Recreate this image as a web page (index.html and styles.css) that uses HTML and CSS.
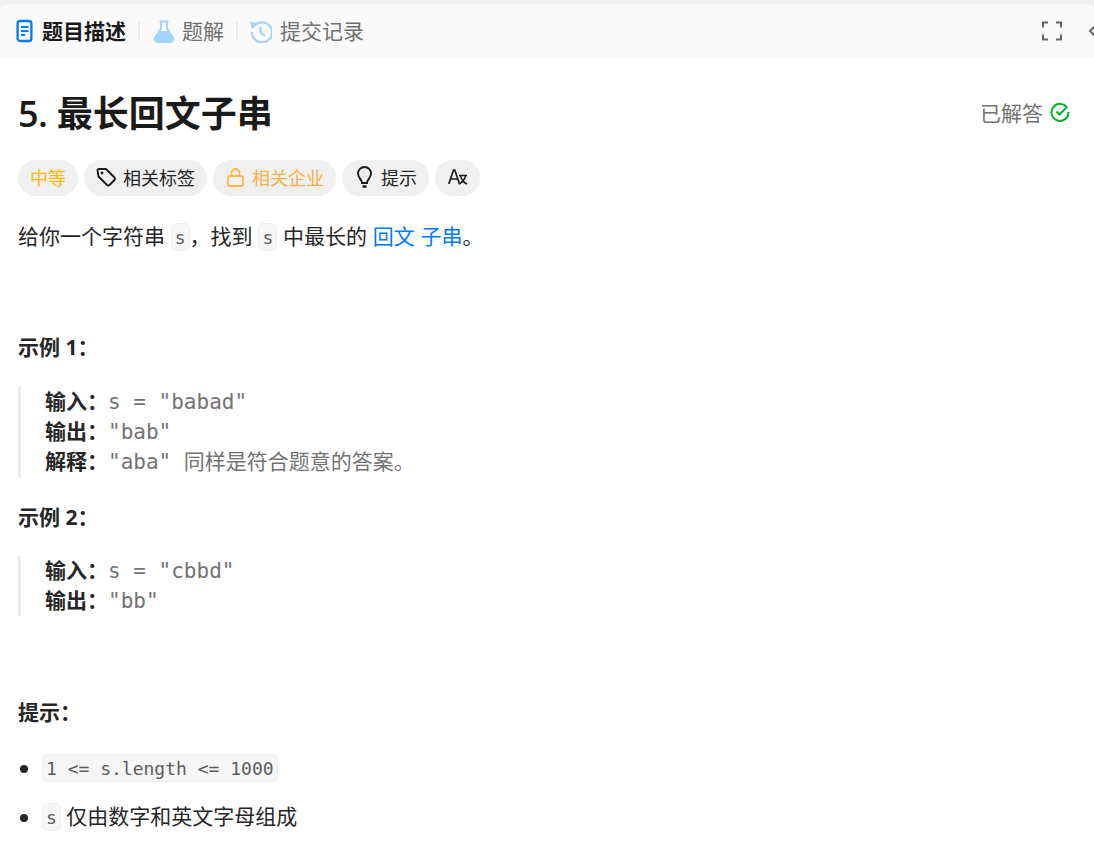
FILE: index.html
```html
<!DOCTYPE html>
<html lang="zh">
<head>
<meta charset="utf-8">
<title>5. 最长回文子串</title>
<link rel="stylesheet" href="styles.css">
</head>
<body>
<div class="panel">
  <nav class="tabbar">
    <div class="tabs">
      <div class="tab active">
        <svg viewBox="0 0 19 24" width="19" height="24"><rect x="2.600" y="2" width="13.800" height="20" rx="2.500" fill="none" stroke="#007aff" stroke-width="2.300"/><path d="M6 8h7.500M6 12h7.500M6 16h4" stroke="#007aff" stroke-width="2" fill="none"/></svg>
        <span>题目描述</span>
      </div>
      <i class="sep"></i>
      <div class="tab">
        <svg viewBox="0 0 22 24" width="22" height="24"><path d="M7.500 2.500h9" fill="none" stroke="#a3d3ff" stroke-width="2"/><path d="M9 3v6.500L3.200 18.500C2 20.800 3.500 23 6 23h12c2.500 0 4-2.200 2.800-4.500L15 9.500V3" fill="none" stroke="#a3d3ff" stroke-width="2"/><path d="M8 12h8l5 8c.500 2-1 3-3 3H6c-2 0-3.500-1-3-3z" fill="#a3d3ff"/></svg>
        <span>题解</span>
      </div>
      <i class="sep"></i>
      <div class="tab">
        <svg viewBox="0 0 22 24" width="22" height="24"><path d="M4.500 6.800A10 10 0 1 1 2 13" fill="none" stroke="#a3d3ff" stroke-width="2.200"/><path d="M0 2.500l8 1.500-6 6z" fill="#a3d3ff"/><path d="M10.500 7.500v6l4.500 3.500" fill="none" stroke="#a3d3ff" stroke-width="2.200"/></svg>
        <span>提交记录</span>
      </div>
    </div>
    <div class="tools">
      <svg viewBox="0 0 20 20" width="20" height="20"><path d="M1 6.500V1.500h5M14 1.500h5v5M19 13.500v5h-5M6 18.500H1v-5" fill="none" stroke="#666" stroke-width="2"/></svg>
      <svg viewBox="0 0 12 20" width="12" height="20"><path d="M9 3L2 10l7 7" fill="none" stroke="#666" stroke-width="2"/></svg>
    </div>
  </nav>
  <main class="content">
    <header class="title-row">
      <h1><span class="num">5.</span> 最长回文子串</h1>
      <div class="solved">已解答
        <svg viewBox="0 0 20 20" width="20" height="20"><path d="M17.300 6A8.500 8.500 0 1 0 18.500 10" fill="none" stroke="#01b328" stroke-width="2"/><path d="M6.500 9.500l3 3L16 6" fill="none" stroke="#01b328" stroke-width="2"/></svg>
      </div>
    </header>
    <div class="chips">
      <span class="chip yellow">中等</span>
      <span class="chip"><svg viewBox="0 0 21 24" width="21" height="24"><path d="M1.500 5.500A1.500 1.500 0 0 1 3 4h7l8.500 8.500a2 2 0 0 1 0 2.500l-5 5a2 2 0 0 1-2.500 0L2.500 11.500z" fill="none" stroke="#1a1a1a" stroke-width="1.900"/><circle cx="6" cy="8" r="1.400" fill="#1a1a1a"/></svg>相关标签</span>
      <span class="chip orange"><svg viewBox="0 0 21 24" width="21" height="24"><rect x="3" y="11" width="15" height="10" rx="2" fill="none" stroke="#ffb84d" stroke-width="1.900"/><path d="M6.500 11V8a4 4 0 0 1 8 0v3" fill="none" stroke="#ffb84d" stroke-width="1.900"/></svg>相关企业</span>
      <span class="chip"><svg viewBox="0 0 21 24" width="21" height="24"><path d="M8 18c0-3.500-4-5-4-9.500a6.500 6.500 0 0 1 13 0c0 4.500-4 6-4 9.500z" fill="none" stroke="#1a1a1a" stroke-width="1.900"/><path d="M8.500 21.500h4" stroke="#1a1a1a" stroke-width="2.400"/></svg>提示</span>
      <span class="chip icon-only"><svg viewBox="0 0 21 18" width="21" height="18"><path d="M1.800 16L6.500 2h1.300l4.700 14M3.500 11h7.500" fill="none" stroke="#1a1a1a" stroke-width="1.700"/><path d="M12 7.500h8M13.500 8c1 3.500 3 6.500 6.500 8M18.500 8c-1 3.500-3 6.500-6.500 8" fill="none" stroke="#1a1a1a" stroke-width="1.500"/></svg></span>
    </div>
    <p class="intro">给你一个字符串 <code>s</code>，找到 <code>s</code> 中最长的 <a href="#">回文</a> <a href="#">子串</a>。</p>
    <p class="heading first"><strong>示例 1：</strong></p>
    <blockquote>
      <div><strong>输入：</strong>s = "babad"</div>
      <div><strong>输出：</strong>"bab"</div>
      <div><strong>解释：</strong>"aba" 同样是符合题意的答案。</div>
    </blockquote>
    <p class="heading"><strong>示例 2：</strong></p>
    <blockquote>
      <div><strong>输入：</strong>s = "cbbd"</div>
      <div><strong>输出：</strong>"bb"</div>
    </blockquote>
    <p class="heading hint"><strong>提示：</strong></p>
    <ul>
      <li><code>1 &lt;= s.length &lt;= 1000</code></li>
      <li><code>s</code> 仅由数字和英文字母组成</li>
    </ul>
  </main>
</div>
</body>
</html>
```
FILE: styles.css
```css
* { box-sizing: border-box; }
html, body { margin: 0; height: 100%; overflow: hidden; }
body {
  background: #f0f0f0;
  padding-top: 4px;
  font-family: "Open Sans", "Noto Sans CJK SC", sans-serif;
  color: #262626;
  font-size: 21px;
}
.panel { background: #fff; height: 850px; border-radius: 8px 8px 0 0; overflow: hidden; }
.tabbar {
  height: 53px;
  background: #fafafa;
  display: flex;
  align-items: center;
  justify-content: space-between;
  padding-left: 15px;
}
.tabs { display: flex; align-items: center; }
.tab { display: flex; align-items: center; gap: 8px; color: #707070; }
.tab span { margin-bottom: 2px; }
.tab.active { color: #1a1a1a; font-weight: 700; }
.sep { width: 2px; height: 18px; background: #ececec; margin: 0 12px; }
.tools { display: flex; align-items: center; gap: 26px; margin-right: -6px; }
.content { padding: 0 24px 0 18px; }
.title-row { display: flex; justify-content: space-between; align-items: center; margin-top: 32px; height: 50px; }
h1 { margin: 0; font-size: 36px; font-weight: 700; color: #1a1a1a; line-height: 50px; }
.num { font-weight: 600; letter-spacing: -0.5px; }
.solved { display: flex; align-items: center; gap: 7px; color: #737373; padding-bottom: 4px; }
.chips { display: flex; gap: 6px; margin-top: 21px; }
.chip {
  height: 36px;
  display: flex;
  align-items: center;
  gap: 6px;
  padding: 0 12px 2px;
  border-radius: 18px;
  background: #f0f0f0;
  font-size: 18px;
  color: #262626;
}
.chip.yellow { color: #ffb800; }
.chip.orange { color: #f5b04b; }
p { margin: 0; }
.intro { margin-top: 22px; line-height: 36px; word-spacing: 0.3px; }
a { color: #007aff; text-decoration: none; }
code {
  font-family: "DejaVu Sans Mono", monospace;
  font-size: 18px;
  line-height: 1;
  word-spacing: 0;
  color: #5c5c5c;
  background: #f6f6f6;
  border: 1px solid #eeeeee;
  border-radius: 6px;
  padding: 3px 3px 2px;
}
.heading { line-height: 30px; margin-top: 25px; }
.heading.first { margin-top: 78px; }
.heading.hint { margin-top: 81px; }
strong { font-weight: 700; color: #262626; }
blockquote {
  margin: 24px 0 0;
  border-left: 3px solid #ececec;
  padding-left: 24px;
  line-height: 30px;
  color: #737373;
  font-family: "DejaVu Sans Mono", "Noto Sans CJK SC", monospace;
}
.first + blockquote { margin-top: 25px; }
blockquote strong { font-family: "Open Sans", "Noto Sans CJK SC", sans-serif; line-height: 1; }
ul { margin: 23px 0 0; padding-left: 24px; list-style: none; }
li { line-height: 34px; margin-bottom: 15px; }
li::before {
  content: "";
  display: inline-block;
  width: 8px;
  height: 8px;
  border-radius: 50%;
  background: #262626;
  margin-left: -22px;
  margin-right: 14px;
  vertical-align: 2px;
}
```
